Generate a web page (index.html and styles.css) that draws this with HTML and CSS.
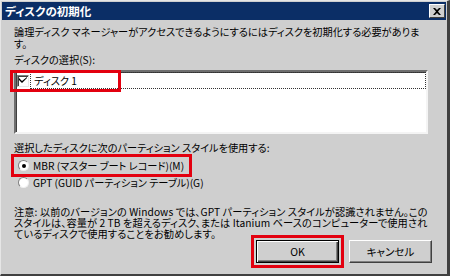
FILE: index.html
```html
<!DOCTYPE html>
<html lang="ja">
  <head>
    <meta charset="UTF-8" />
    <title>ディスクの初期化</title>
    <link rel="stylesheet" href="styles.css">
  </head>
  <body>
    <div class="window">
      <div class="titlebar">
        <span class="title">ディスクの初期化</span>
        <span class="close">
          <svg width="8" height="7" viewBox="0 0 8 7">
            <path d="M0 0h2l2 2 2-2h2L5 3.5 8 7H6L4 5 2 7H0l3-3.5z" fill="#000" />
          </svg>
        </span>
      </div>

      <div class="content">
        <p class="intro">論理ディスク マネージャーがアクセスできるようにするにはディスクを初期化する必要がありま<br>す。</p>
        <p class="label">ディスクの選択(S):</p>

        <div class="listbox">
          <div class="list-row">
            <span class="checkbox">
              <svg width="8" height="7" viewBox="0 0 8 7">
                <path d="M0 3l3 3 5-5V0L3 4 0 1z" fill="#000" />
              </svg>
            </span>
            <span class="item-text">ディスク 1</span>
            <span class="highlight disk-hl"></span>
          </div>
        </div>

        <p class="label label-style">選択したディスクに次のパーティション スタイルを使用する:</p>
        <div class="radio-row">
          <span class="radio-wrap marked">
            <span class="radio checked"></span>
            <span>MBR (マスター ブート レコード)(M)</span>
          </span>
        </div>
        <div class="radio-row">
          <span class="radio-wrap">
            <span class="radio"></span>
            <span>GPT (GUID パーティション テーブル)(G)</span>
          </span>
        </div>

        <p class="note">注意: 以前のバージョンの Windows では、GPT パーティション スタイルが認識されません。この<br>スタイルは、容量が 2 TB を超えるディスク、または Itanium ベースのコンピューターで使用され<br>ているディスクで使用することをお勧めします。</p>

        <div class="buttons">
          <button class="btn btn-default marked" type="button">OK</button>
          <button class="btn" type="button">キャンセル</button>
        </div>
      </div>
    </div>
  </body>
</html>
```

FILE: styles.css
```css
body {
  margin: 0;
  font-family: "Noto Sans CJK JP", "DejaVu Sans", sans-serif;
  font-size: 10.2px;
  font-feature-settings: "palt";
  color: #000;
}

p {
  margin: 0;
  white-space: nowrap;
}

.window {
  width: 450px;
  height: 276px;
  box-sizing: border-box;
  padding: 1px;
  background: #cfcfcf;
  border-top: 1px solid #e6e6e6;
  border-left: 1px solid #e6e6e6;
  border-right: 3px solid #404040;
  border-bottom: 2px solid #404040;
  display: flex;
  flex-direction: column;
}

.titlebar {
  height: 18px;
  flex: none;
  background: #0b2e66;
  display: flex;
  align-items: center;
  justify-content: space-between;
  padding: 0 1px 0 3px;
}
.title {
  color: #fff;
  font-weight: bold;
  font-size: 11.5px;
  line-height: 18px;
}
.close {
  width: 16px;
  height: 14px;
  box-sizing: border-box;
  background: #cfcfcf;
  border-top: 1px solid #fff;
  border-left: 1px solid #fff;
  border-right: 1px solid #404040;
  border-bottom: 1px solid #404040;
  display: flex;
  align-items: center;
  justify-content: center;
}

.content {
  padding: 6px 14px 0 12px;
  flex: 1;
}

.intro {
  line-height: 12px;
}
.label {
  margin-top: 4px;
  line-height: 12px;
}
.label-style {
  margin-top: 8px;
}

.listbox {
  margin-top: 4px;
  width: 414px;
  height: 64px;
  box-sizing: border-box;
  background: #fff;
  border-style: solid;
  border-width: 2px;
  border-color: #6e6e6e #f4f4f4 #f4f4f4 #6e6e6e;
  box-shadow: inset 1px 1px 0 #404040;
}
.list-row {
  position: relative;
  display: flex;
  align-items: center;
  height: 17px;
  padding-left: 1px;
}
.checkbox {
  width: 12px;
  height: 12px;
  box-sizing: border-box;
  margin-right: 1px;
  background: #fff;
  border-style: solid;
  border-width: 1px;
  border-color: #808080 #e6e6e6 #e6e6e6 #808080;
  box-shadow: inset 1px 1px 0 #404040;
  display: flex;
  align-items: center;
  justify-content: center;
}
.item-text {
  flex: 1;
  height: 17px;
  box-sizing: border-box;
  border: 1px dotted #333;
  padding-left: 3px;
  line-height: 15px;
}
.highlight {
  position: absolute;
  box-sizing: border-box;
  border: 3px solid #e3000f;
  pointer-events: none;
}
.disk-hl {
  left: -6px;
  top: -2px;
  width: 111px;
  height: 22px;
}

.radio-row {
  margin-top: 3px;
  height: 17px;
  display: flex;
  align-items: center;
}
.radio-row + .radio-row {
  margin-top: 0;
}
.radio-wrap {
  display: inline-flex;
  align-items: center;
  height: 17px;
  padding: 0 5px 0 4px;
  gap: 4px;
}
.marked {
  outline: 3px solid #e3000f;
}
.radio {
  width: 11px;
  height: 11px;
  box-sizing: border-box;
  border-radius: 50%;
  background: #fff;
  border: 1px solid;
  border-color: #808080 #f0f0f0 #f0f0f0 #808080;
  display: flex;
  align-items: center;
  justify-content: center;
}
.radio.checked::after {
  content: "";
  width: 4px;
  height: 4px;
  border-radius: 50%;
  background: #000;
}

.note {
  margin-top: 15px;
  line-height: 11px;
  letter-spacing: 0.1px;
}

.buttons {
  display: flex;
  justify-content: flex-end;
  gap: 10px;
  margin-top: 1px;
}
.btn {
  width: 83px;
  height: 23px;
  padding: 0;
  font: inherit;
  font-size: 10.5px;
  background: #cfcfcf;
  border-style: solid;
  border-width: 1px;
  border-color: #fff #404040 #404040 #fff;
  box-shadow: inset -1px -1px 0 #808080;
}
.btn-default {
  border: 1px solid #000;
  box-shadow: inset 1px 1px 0 #fff, inset -1px -1px 0 #404040, inset -2px -2px 0 #808080;
  outline-offset: 2px;
}
```
